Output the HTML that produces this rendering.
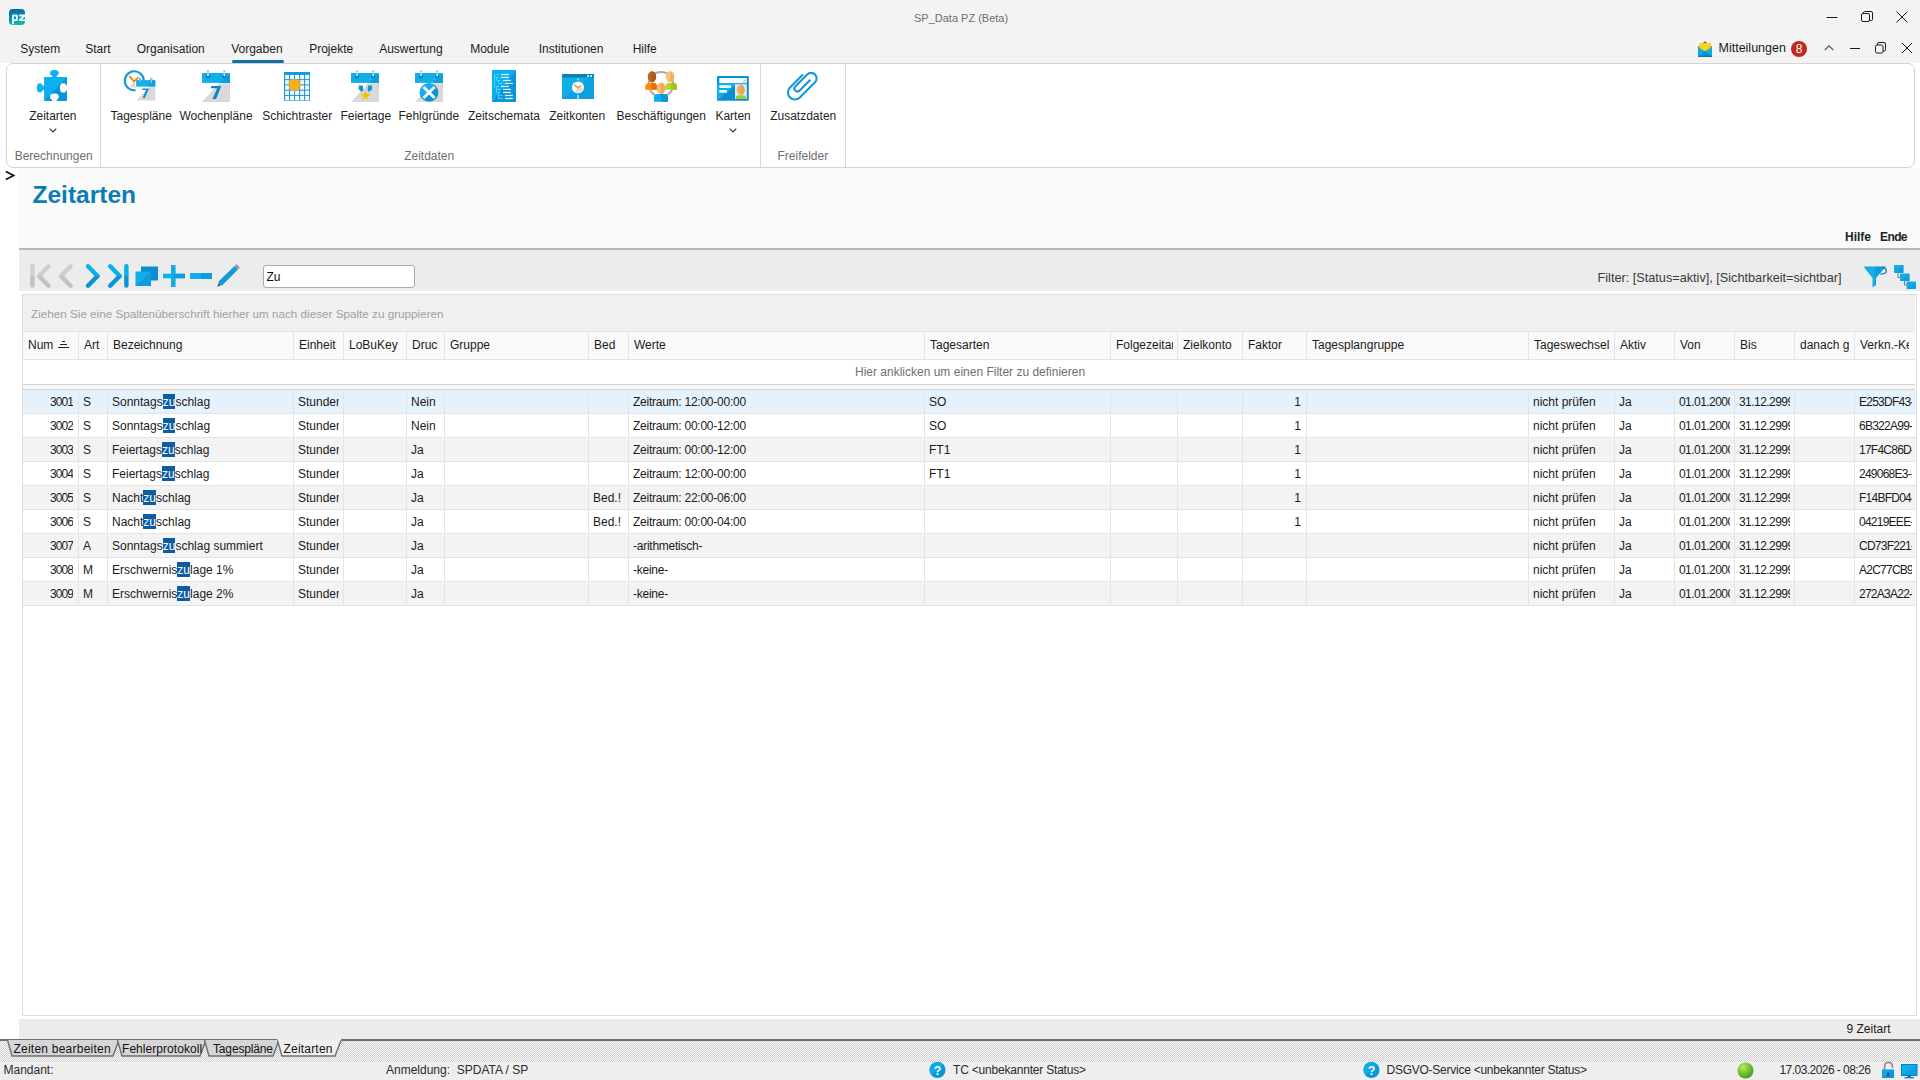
<!DOCTYPE html>
<html><head><meta charset="utf-8"><title>SP_Data PZ (Beta)</title>
<style>
html,body{margin:0;padding:0;width:1920px;height:1080px;overflow:hidden;background:#fff;font-family:"Liberation Sans",sans-serif;}
.r{position:absolute;box-sizing:content-box;}
svg.r{overflow:visible}
.t{position:absolute;white-space:nowrap;line-height:1;font-family:"Liberation Sans",sans-serif;}
.hl{background:#0b5ea6;color:#fff;padding:1px 0 0.4px 0}
.dither{background-color:#f4f4f4;background-image:repeating-linear-gradient(45deg,rgba(0,0,0,0.06) 0 1px,transparent 1px 2px),repeating-linear-gradient(-45deg,rgba(0,0,0,0.06) 0 1px,transparent 1px 2px)}
</style></head><body>
<div class="r" style="left:0px;top:0px;width:1920px;height:63px;background:#f3f3f3;"></div><div class="r" style="left:0px;top:63px;width:1920px;height:1017px;background:#ffffff;"></div><svg class="r" style="left:9px;top:9px" width="16" height="16" viewBox="0 0 16 16"><defs><linearGradient id="lg" x1="0" y1="0" x2="0.25" y2="1"><stop offset="0" stop-color="#0a5ea6"/><stop offset="0.6" stop-color="#0c8db8"/><stop offset="1" stop-color="#15b9a2"/></linearGradient></defs><rect x="0" y="0" width="16" height="16" rx="3.8" fill="url(#lg)"/><path fill-rule="evenodd" d="M3 6.6 Q3 5.6 4 5.6 H7.8 Q8.8 5.6 8.8 6.6 V11 Q8.8 12 7.8 12 H4.9 V15.2 H3 Z M4.9 7.4 V10.2 H7 V7.4 Z" fill="#e9fbff"/><path d="M10.1 5.6 H16 V7.4 L12.9 10.2 H16 V12 H10.1 V10.2 L13.2 7.4 H10.1 Z" fill="#e9fbff"/></svg><div class="t " style="left:914.0px;top:12.69px;font-size:11px;color:#6e6e6e;font-weight:400;">SP_Data PZ (Beta)</div><svg class="r" style="left:1826px;top:11px" width="12" height="12" viewBox="0 0 12 12"><line x1="0.5" y1="6.5" x2="11.5" y2="6.5" stroke="#1b1b1b" stroke-width="1"/></svg><svg class="r" style="left:1861px;top:11px" width="12" height="12" viewBox="0 0 12 12"><rect x="0.5" y="2.5" width="8" height="8" rx="1.5" fill="none" stroke="#1b1b1b"/><path d="M2.5 2.5 V1.5 a1 1 0 0 1 1 -1 H10 a1.5 1.5 0 0 1 1.5 1.5 V8.5 a1 1 0 0 1 -1 1 H8.5" fill="none" stroke="#1b1b1b"/></svg><svg class="r" style="left:1896px;top:11px" width="12" height="12" viewBox="0 0 12 12"><path d="M0.5 0.5 L11.5 11.5 M11.5 0.5 L0.5 11.5" stroke="#1b1b1b" stroke-width="1"/></svg><div class="t " style="left:20.2px;top:42.84px;font-size:12px;color:#1b1b1b;font-weight:400;">System</div><div class="t " style="left:85.2px;top:42.84px;font-size:12px;color:#1b1b1b;font-weight:400;">Start</div><div class="t " style="left:136.7px;top:42.84px;font-size:12px;color:#1b1b1b;font-weight:400;">Organisation</div><div class="t " style="left:231.2px;top:42.84px;font-size:12px;color:#1b1b1b;font-weight:400;">Vorgaben</div><div class="t " style="left:309.2px;top:42.84px;font-size:12px;color:#1b1b1b;font-weight:400;">Projekte</div><div class="t " style="left:379.2px;top:42.84px;font-size:12px;color:#1b1b1b;font-weight:400;">Auswertung</div><div class="t " style="left:470.2px;top:42.84px;font-size:12px;color:#1b1b1b;font-weight:400;">Module</div><div class="t " style="left:538.7px;top:42.84px;font-size:12px;color:#1b1b1b;font-weight:400;">Institutionen</div><div class="t " style="left:632.7px;top:42.84px;font-size:12px;color:#1b1b1b;font-weight:400;">Hilfe</div><div class="r" style="left:232px;top:60px;width:52px;height:3px;background:#0f6fa6;border-radius:2px"></div><svg class="r" style="left:1697px;top:41px" width="16" height="16" viewBox="0 0 16 16"><path d="M5.5 2.2 L8 0.2 L10.5 2.2 Z" fill="#2f6f6a"/><rect x="1" y="5.2" width="14" height="10.6" fill="#0aaeea"/><path d="M1 15.8 L8 10.2 L15 15.8 Z" fill="#0a8fd0"/><rect x="1" y="14.8" width="14" height="1" fill="#0a6fa8"/><path d="M1.3 5.3 L8 10.6 L14.7 5.3" fill="none" stroke="#3a8a7a" stroke-width="0.8"/><path d="M2.3 2 H13.7 V7 L8 10.3 L2.3 7 Z" fill="#fbd21e"/><path d="M13.7 4 V7 L10 9.2 Z" fill="#eeb40a"/></svg><div class="t " style="left:1718.5px;top:42.42px;font-size:12.5px;color:#1b1b1b;font-weight:400;">Mitteilungen</div><svg class="r" style="left:1791px;top:41px" width="16" height="16" viewBox="0 0 16 16"><circle cx="8" cy="8" r="8" fill="#c4281c"/><text x="8" y="12.3" text-anchor="middle" font-family="Liberation Sans" font-size="12" fill="#fff">8</text></svg><svg class="r" style="left:1824px;top:44px" width="10" height="8" viewBox="0 0 10 8"><path d="M0.8 6 L5 1.8 L9.2 6" fill="none" stroke="#555" stroke-width="1.1"/></svg><svg class="r" style="left:1849px;top:43px" width="12" height="10" viewBox="0 0 12 10"><line x1="1" y1="5.5" x2="11" y2="5.5" stroke="#1b1b1b" stroke-width="1"/></svg><svg class="r" style="left:1875px;top:42px" width="12" height="12" viewBox="0 0 12 12"><rect x="0.5" y="3" width="7.5" height="8" rx="1.5" fill="none" stroke="#1b1b1b"/><path d="M2.5 3 V2 a1.5 1.5 0 0 1 1.5 -1.5 H9 a1.5 1.5 0 0 1 1.5 1.5 V7.5 a1.5 1.5 0 0 1 -1.5 1.5 H8" fill="none" stroke="#1b1b1b"/></svg><svg class="r" style="left:1901px;top:42px" width="12" height="12" viewBox="0 0 12 12"><path d="M1 1 L11 11 M11 1 L1 11" stroke="#1b1b1b" stroke-width="1"/></svg><div class="r" style="left:6px;top:63px;width:1907px;height:103px;border:1px solid #d3d3d3;border-radius:7px;background:#fff"></div><div class="r" style="left:100px;top:64px;width:1px;height:103px;background:#d9d9d9;"></div><div class="r" style="left:760px;top:64px;width:1px;height:103px;background:#d9d9d9;"></div><div class="r" style="left:845px;top:64px;width:1px;height:103px;background:#d9d9d9;"></div><svg class="r" style="left:36px;top:69px" width="32" height="33" viewBox="0 0 32 33"><defs><mask id="pm"><rect width="32" height="33" fill="#fff"/><ellipse cx="27.3" cy="18.9" rx="3.4" ry="4.7" fill="#000"/><rect x="28" y="16.6" width="4" height="4.6" fill="#000"/><ellipse cx="18.4" cy="27.7" rx="4.4" ry="3.3" fill="#000"/><rect x="16.2" y="28" width="4.4" height="5" fill="#000"/></mask>
<clipPath id="pc"><path d="M8 32 L31 8 V32 Z"/></clipPath></defs>
<g mask="url(#pm)">
<rect x="8.1" y="8" width="22.8" height="23.9" fill="#0ab0ef"/>
<ellipse cx="18.4" cy="3.9" rx="4.4" ry="2.9" fill="#0ab0ef"/><rect x="16.2" y="4" width="4.4" height="4.5" fill="#0ab0ef"/>
<ellipse cx="3.8" cy="18.9" rx="2.9" ry="4.6" fill="#0ab0ef"/><rect x="3.8" y="16.7" width="4.8" height="4.4" fill="#0ab0ef"/>
<g clip-path="url(#pc)"><rect x="8.1" y="8" width="22.8" height="23.9" fill="#0a96d6"/></g></g></svg><svg class="r" style="left:202px;top:70px" width="28" height="32" viewBox="0 0 28 32"><path d="M16.9 13.2 H28 V32 H0 Z" fill="#d9d9d9"/>
<rect x="0" y="3" width="28" height="9.9" fill="#12aeea"/>
<path d="M18 12.9 L28 4 V12.9 Z" fill="#0b8fd2" opacity="0.6"/>
<path d="M6 0.3 V6.5 M22.2 0.3 V6.5" stroke="#c9eefc" stroke-width="1.3"/>
<path d="M6 0.3 V2.5 M22.2 0.3 V2.5" stroke="#9aa" stroke-width="1.3"/>
<path d="M4.4 5.6 A1.6 2 0 0 0 7.6 5.6 M20.6 5.6 A1.6 2 0 0 0 23.8 5.6" fill="none" stroke="#0b4e7e" stroke-width="1"/>
<path d="M9.1 16.1 H19.3 L14 28.9 H10.5 L15.2 18.2 H9.1 Z" fill="#0a86c8"/></svg><svg class="r" style="left:351px;top:70px" width="28" height="32" viewBox="0 0 28 32"><path d="M16.9 13.2 H28 V32 H0 Z" fill="#d9d9d9"/>
<rect x="0" y="3" width="28" height="9.9" fill="#12aeea"/>
<path d="M18 12.9 L28 4 V12.9 Z" fill="#0b8fd2" opacity="0.6"/>
<path d="M6 0.3 V6.5 M22.2 0.3 V6.5" stroke="#c9eefc" stroke-width="1.3"/>
<path d="M6 0.3 V2.5 M22.2 0.3 V2.5" stroke="#9aa" stroke-width="1.3"/>
<path d="M4.4 5.6 A1.6 2 0 0 0 7.6 5.6 M20.6 5.6 A1.6 2 0 0 0 23.8 5.6" fill="none" stroke="#0b4e7e" stroke-width="1"/>
<path d="M7.8 15.5 H12 V20.5 L11 22 L7.8 19.5 Z" fill="#0a95d6"/><path d="M16.8 15.5 H21 V19.5 L17.8 22 L16.8 20.5 Z" fill="#0a95d6"/><path d="M14.40 20.20 L15.81 23.86 L19.73 24.07 L16.68 26.54 L17.69 30.33 L14.40 28.20 L11.11 30.33 L12.12 26.54 L9.07 24.07 L12.99 23.86 Z" fill="#f7c51e"/><path d="M14.4 20.2 L16 23.9 L20 24 L14.4 27 Z" fill="#e9a90f" opacity="0.5"/></svg><svg class="r" style="left:415px;top:70px" width="28" height="32" viewBox="0 0 28 32"><path d="M16.9 13.2 H28 V32 H0 Z" fill="#d9d9d9"/>
<rect x="0" y="3" width="28" height="9.9" fill="#12aeea"/>
<path d="M18 12.9 L28 4 V12.9 Z" fill="#0b8fd2" opacity="0.6"/>
<path d="M6 0.3 V6.5 M22.2 0.3 V6.5" stroke="#c9eefc" stroke-width="1.3"/>
<path d="M6 0.3 V2.5 M22.2 0.3 V2.5" stroke="#9aa" stroke-width="1.3"/>
<path d="M4.4 5.6 A1.6 2 0 0 0 7.6 5.6 M20.6 5.6 A1.6 2 0 0 0 23.8 5.6" fill="none" stroke="#0b4e7e" stroke-width="1"/>
<circle cx="14.1" cy="22.5" r="9.3" fill="#0a95d6"/><path d="M14.1 13.2 A9.3 9.3 0 0 0 7.5 29.1 L20.7 15.9 A9.3 9.3 0 0 0 14.1 13.2 Z" fill="#12aeea"/><path d="M8.6 17 L19.6 28 M19.6 17 L8.6 28" stroke="#fff" stroke-width="2.8"/></svg><svg class="r" style="left:123px;top:70px" width="34" height="32" viewBox="0 0 34 32"><path d="M11.3 11 L6.8 17.3 L12.8 17.8 Z" fill="#d9d9d9"/>
<path d="M20.79 10.3 A9.5 9.5 0 1 0 12.62 20.2" fill="none" stroke="#1499d8" stroke-width="2.1"/>
<path d="M6.3 5.9 L11 11.6 L15.4 7.3" fill="none" stroke="#e0841c" stroke-width="1.7"/>
<path d="M26.7 16.6 H32.3 V30.5 H13.3 Z" fill="#d9d9d9"/>
<rect x="13.1" y="10.1" width="19.2" height="6.5" fill="#12aeea"/>
<path d="M24 16.6 L32.3 10.1 V16.6 Z" fill="#0b8fd2" opacity="0.45"/>
<rect x="16.4" y="8" width="1.3" height="5.3" rx="0.6" fill="#d8eef8" stroke="#1778b0" stroke-width="0.5"/>
<rect x="27.7" y="8" width="1.3" height="5.3" rx="0.6" fill="#d8eef8" stroke="#1778b0" stroke-width="0.5"/>
<path d="M19.3 18.5 H26 L21.8 28 H19.6 L23.2 20.1 H19.3 Z" fill="#0b8fd2"/></svg><svg class="r" style="left:284px;top:72px" width="26" height="29" viewBox="0 0 26 29"><rect x="0" y="0" width="26" height="28.7" fill="#1d8fce"/><rect x="0" y="0" width="26" height="2" fill="#0a9fe0"/><rect x="1.1" y="2.90" width="4.0" height="4.25" fill="#f2fbff"/><rect x="6.1" y="2.90" width="4.0" height="4.25" fill="#f2fbff"/><rect x="11.1" y="2.90" width="4.0" height="4.25" fill="#f2fbff"/><rect x="16.1" y="2.90" width="4.0" height="4.25" fill="#f2fbff"/><rect x="21.1" y="2.90" width="4.0" height="4.25" fill="#f2fbff"/><rect x="1.1" y="8.15" width="4.0" height="4.25" fill="#f2fbff"/><rect x="6.1" y="8.15" width="4.0" height="4.25" fill="#f2fbff"/><rect x="11.1" y="8.15" width="4.0" height="4.25" fill="#f2fbff"/><rect x="16.1" y="8.15" width="4.0" height="4.25" fill="#f2fbff"/><rect x="21.1" y="8.15" width="4.0" height="4.25" fill="#f2fbff"/><rect x="1.1" y="13.40" width="4.0" height="4.25" fill="#f2fbff"/><rect x="6.1" y="13.40" width="4.0" height="4.25" fill="#f2fbff"/><rect x="11.1" y="13.40" width="4.0" height="4.25" fill="#f2fbff"/><rect x="16.1" y="13.40" width="4.0" height="4.25" fill="#f2fbff"/><rect x="21.1" y="13.40" width="4.0" height="4.25" fill="#f2fbff"/><rect x="1.1" y="18.65" width="4.0" height="4.25" fill="#f2fbff"/><rect x="6.1" y="18.65" width="4.0" height="4.25" fill="#f2fbff"/><rect x="11.1" y="18.65" width="4.0" height="4.25" fill="#f2fbff"/><rect x="16.1" y="18.65" width="4.0" height="4.25" fill="#f2fbff"/><rect x="21.1" y="18.65" width="4.0" height="4.25" fill="#f2fbff"/><rect x="1.1" y="23.90" width="4.0" height="4.25" fill="#f2fbff"/><rect x="6.1" y="23.90" width="4.0" height="4.25" fill="#f2fbff"/><rect x="11.1" y="23.90" width="4.0" height="4.25" fill="#f2fbff"/><rect x="16.1" y="23.90" width="4.0" height="4.25" fill="#f2fbff"/><rect x="21.1" y="23.90" width="4.0" height="4.25" fill="#f2fbff"/><defs><radialGradient id="og" cx="0.5" cy="0.5" r="0.6"><stop offset="0.55" stop-color="#f9b418"/><stop offset="1" stop-color="#f9b418" stop-opacity="0"/></radialGradient></defs><rect x="4" y="6.5" width="13" height="12.5" rx="3" fill="url(#og)"/><rect x="6" y="8.3" width="9" height="9" rx="1" fill="#f8ac16"/></svg><svg class="r" style="left:492px;top:70px" width="24" height="32" viewBox="0 0 24 32"><rect x="0" y="0" width="24" height="32" fill="#0aafef"/><path d="M0 32 L24 0 V32 Z" fill="#0a95d6"/><path d="M2.5 5 V16.4 M2.5 4.45 H7 M2.5 7.4 H7 M4.5 7.4 V10.4 H9 M6.5 10.4 V13.4 H11 M2.5 16.4 H7 M4.5 16.4 V22.4 M4.5 19.4 H9 M4.5 22.4 H9 M6.5 22.4 V28.4 M6.5 25.4 H11 M6.5 28.4 H11" stroke="#52d4fb" stroke-width="0.9" fill="none"/><rect x="10.1" y="8.50" width="7" height="1" fill="#2a6f90" opacity="0.35"/><rect x="12.1" y="11.50" width="7" height="1" fill="#2a6f90" opacity="0.35"/><rect x="14" y="14.50" width="7" height="1" fill="#2a6f90" opacity="0.35"/><rect x="12.1" y="20.50" width="7" height="1" fill="#2a6f90" opacity="0.35"/><rect x="12.1" y="23.50" width="7" height="1" fill="#2a6f90" opacity="0.35"/><rect x="14" y="26.50" width="7" height="1" fill="#2a6f90" opacity="0.35"/><rect x="9.1" y="3.85" width="7.8" height="1.3" fill="#d2f6ff"/><rect x="9.1" y="6.80" width="7.8" height="1.3" fill="#d2f6ff"/><rect x="11.1" y="9.80" width="7.8" height="1.3" fill="#d2f6ff"/><rect x="13" y="12.80" width="7.8" height="1.3" fill="#d2f6ff"/><rect x="9.1" y="15.80" width="7.8" height="1.3" fill="#d2f6ff"/><rect x="11.1" y="18.80" width="7.8" height="1.3" fill="#d2f6ff"/><rect x="11.1" y="21.80" width="7.8" height="1.3" fill="#d2f6ff"/><rect x="13" y="24.80" width="7.8" height="1.3" fill="#d2f6ff"/><rect x="13" y="27.80" width="7.8" height="1.3" fill="#d2f6ff"/></svg><svg class="r" style="left:562px;top:74px" width="32" height="26" viewBox="0 0 32 26"><rect x="0" y="0" width="32" height="25" fill="#12aeea"/><path d="M0 25 L32 0 V25 Z" fill="#0b8fd2" opacity="0.45"/><rect x="0" y="0" width="32" height="3.5" fill="#0a7fbf"/><rect x="25" y="1" width="2" height="2" fill="#aef0ff"/><rect x="28" y="1" width="2" height="2" fill="#aef0ff"/><rect x="15.2" y="4.3" width="1.7" height="1.8" fill="#8fe6ff"/><rect x="15.2" y="21" width="1.7" height="4" fill="#8fe6ff"/><circle cx="16" cy="13.5" r="6" fill="#fff"/><path d="M16 13.5 L12.6 18 A6 6 0 0 0 22 13.5 Z" fill="#dedede"/><path d="M12.3 10.8 L16 14 L19.2 11.4" fill="none" stroke="#e8851c" stroke-width="1.3"/></svg><svg class="r" style="left:640px;top:66px" width="44" height="40" viewBox="0 0 44 40"><circle cx="21" cy="18.3" r="12.3" fill="none" stroke="#ababab" stroke-width="2"/>
<ellipse cx="11.9" cy="10.8" rx="4.2" ry="5.6" fill="#bb6a22"/><path d="M11.9 5.2 a4.2 5.6 0 0 1 0 11.2 Z" fill="#a85d1c"/>
<ellipse cx="30" cy="10.8" rx="4.2" ry="5.6" fill="#f6c577"/><path d="M30 5.2 a4.2 5.6 0 0 1 0 11.2 Z" fill="#eeb35e"/>
<path d="M5.2 23.7 V21 Q5.2 16.9 9.5 16.9 H13.5 Q17 16.9 17 21 V23.7 Z" fill="#ff8c00"/><path d="M11.5 16.9 H13.5 Q17 16.9 17 21 V23.7 H11.5 Z" fill="#e86e00"/>
<path d="M25.2 23.7 V21 Q25.2 16.9 29.5 16.9 H33.5 Q37 16.9 37 21 V23.7 Z" fill="#b8d62a"/><path d="M31 16.9 H33.5 Q37 16.9 37 21 V23.7 H31 Z" fill="#a6c123"/>
<path d="M13.9 35.7 V32 Q13.9 28.1 18 28.1 H24 Q28 28.1 28 32 V35.7 Z" fill="#0aafef"/><path d="M21 28.1 H24 Q28 28.1 28 32 V35.7 H21 Z" fill="#0a95d6"/>
<ellipse cx="20.9" cy="22.3" rx="4.3" ry="5.7" fill="#f8b877"/><path d="M20.9 16.6 a4.3 5.7 0 0 1 0 11.4 Z" fill="#eea662"/></svg><svg class="r" style="left:717px;top:76px" width="32" height="25" viewBox="0 0 32 25"><rect x="0" y="0" width="31.8" height="24.8" rx="0.6" fill="#0a90d2"/><path d="M0 24.8 L0 8 L14.5 8 L20 8 L0 24.8 Z" fill="#12adeb"/>
<rect x="2.3" y="2" width="27.5" height="5.2" fill="#f4fcff"/><path d="M24.5 6.5 L28.8 2.8 V6.5 Z" fill="#d0d0d0"/>
<rect x="2.3" y="9.2" width="11.7" height="2.8" fill="#e8fbff"/><rect x="2.3" y="14" width="7.6" height="2.7" fill="#e8fbff"/>
<rect x="18" y="8.2" width="11.8" height="14.8" fill="#d8f0fb"/>
<path d="M19 23 V21.5 Q19 19.3 22 19.3 H26 Q29 19.3 29 21.5 V23 Z" fill="#a6cb2f"/>
<ellipse cx="23.7" cy="14" rx="4" ry="5" fill="#f5ad62"/><path d="M23.7 9 A4 5 0 0 1 23.7 19 Z" fill="#eea052"/></svg><svg class="r" style="left:780px;top:66px" width="44" height="40" viewBox="0 0 44 40"><path d="M23 8.5 L10 21.5 A7 7 0 0 0 19.9 31.4 L35 16.3 A5.5 5.5 0 0 0 27.2 8.5 L15 20.7 A3 3 0 0 0 19.2 24.9 L30.4 13.7" fill="none" stroke="#1596d6" stroke-width="2.1" stroke-linecap="butt"/></svg><div class="t " style="left:29.2px;top:109.84px;font-size:12px;color:#1f1f1f;font-weight:400;">Zeitarten</div><div class="t " style="left:110.5px;top:109.84px;font-size:12px;color:#1f1f1f;font-weight:400;">Tagespläne</div><div class="t " style="left:179.4px;top:109.84px;font-size:12px;color:#1f1f1f;font-weight:400;">Wochenpläne</div><div class="t " style="left:262.2px;top:109.84px;font-size:12px;color:#1f1f1f;font-weight:400;">Schichtraster</div><div class="t " style="left:340.4px;top:109.84px;font-size:12px;color:#1f1f1f;font-weight:400;">Feiertage</div><div class="t " style="left:398.4px;top:109.84px;font-size:12px;color:#1f1f1f;font-weight:400;">Fehlgründe</div><div class="t " style="left:467.9px;top:109.84px;font-size:12px;color:#1f1f1f;font-weight:400;">Zeitschemata</div><div class="t " style="left:549.2px;top:109.84px;font-size:12px;color:#1f1f1f;font-weight:400;">Zeitkonten</div><div class="t " style="left:616.5px;top:109.84px;font-size:12px;color:#1f1f1f;font-weight:400;">Beschäftigungen</div><div class="t " style="left:715.4px;top:109.84px;font-size:12px;color:#1f1f1f;font-weight:400;">Karten</div><div class="t " style="left:770.2px;top:109.84px;font-size:12px;color:#1f1f1f;font-weight:400;">Zusatzdaten</div><svg class="r" style="left:49px;top:128px" width="8" height="5" viewBox="0 0 8 5"><path d="M0.7 0.7 L4 4 L7.3 0.7" fill="none" stroke="#333" stroke-width="1.1"/></svg><svg class="r" style="left:729px;top:128px" width="8" height="5" viewBox="0 0 8 5"><path d="M0.7 0.7 L4 4 L7.3 0.7" fill="none" stroke="#333" stroke-width="1.1"/></svg><div class="t " style="left:14.7px;top:149.84px;font-size:12px;color:#6f6f6f;font-weight:400;">Berechnungen</div><div class="t " style="left:404.2px;top:149.84px;font-size:12px;color:#6f6f6f;font-weight:400;">Zeitdaten</div><div class="t " style="left:777.5px;top:149.84px;font-size:12px;color:#6f6f6f;font-weight:400;">Freifelder</div><div class="r" style="left:19px;top:168px;width:1901px;height:80px;background:#fafafa;"></div><svg class="r" style="left:4px;top:170px" width="11" height="11" viewBox="0 0 11 11"><path d="M1.8 1.6 L9.6 5.5 L1.8 9.4" fill="none" stroke="#111" stroke-width="1.7"/></svg><div class="t " style="left:32.5px;top:183.26px;font-size:24.5px;color:#0c7db3;font-weight:700;">Zeitarten</div><div class="t " style="left:1845.0px;top:230.84px;font-size:12px;color:#222;font-weight:700;">Hilfe</div><div class="t " style="left:1880.0px;top:230.84px;font-size:12px;color:#222;font-weight:700;letter-spacing:-0.6px">Ende</div><div class="r" style="left:19px;top:248px;width:1901px;height:2px;background:#b8b8b8;"></div><div class="r" style="left:19px;top:250px;width:1901px;height:41px;background:#ececec;"></div><svg class="r" style="left:25px;top:258px" width="110" height="34" viewBox="0 0 110 34"><defs><clipPath id="nt"><rect x="0" y="0" width="110" height="18"/></clipPath><clipPath id="nb"><rect x="0" y="18" width="110" height="16"/></clipPath></defs>
<g fill="none" stroke-width="4.4" stroke-linecap="round" stroke-linejoin="round">
<g clip-path="url(#nt)" stroke="#cfcfcf"><path d="M7.4 8.3 V27.6 M23.6 8.3 L14 18 L23.6 27.7 M45.6 8.3 L36 18 L45.6 27.7"/></g>
<g clip-path="url(#nb)" stroke="#c2c2c2"><path d="M7.4 8.3 V27.6 M23.6 8.3 L14 18 L23.6 27.7 M45.6 8.3 L36 18 L45.6 27.7"/></g>
<g clip-path="url(#nt)" stroke="#0aafef"><path d="M63 8.3 L72.6 18 L63 27.7 M85.2 8.3 L94.8 18 L85.2 27.7 M101.4 8.3 V27.6"/></g>
<g clip-path="url(#nb)" stroke="#0a94d4"><path d="M63 8.3 L72.6 18 L63 27.7 M85.2 8.3 L94.8 18 L85.2 27.7 M101.4 8.3 V27.6"/></g>
</g></svg><svg class="r" style="left:135px;top:266px" width="24" height="21" viewBox="0 0 24 21"><rect x="6" y="0.5" width="17" height="14" fill="#0b8fd2"/><rect x="0.5" y="5.5" width="15.5" height="14.5" fill="#12aeea"/><path d="M0.5 20 L16 5.5 V20 Z" fill="#0b8fd2" opacity="0.6"/></svg><svg class="r" style="left:162px;top:264px" width="24" height="24" viewBox="0 0 24 24"><rect x="9" y="1" width="4.6" height="22" fill="#12aeea"/><rect x="1" y="9.7" width="22" height="4.6" fill="#12aeea"/><rect x="11.3" y="9.7" width="11.7" height="4.6" fill="#0b8fd2" opacity="0.6"/></svg><svg class="r" style="left:189px;top:272px" width="24" height="8" viewBox="0 0 24 8"><rect x="1" y="1" width="22" height="6" fill="#12aeea"/><rect x="12" y="1" width="11" height="6" fill="#0b8fd2" opacity="0.6"/></svg><svg class="r" style="left:215px;top:263px" width="26" height="26" viewBox="0 0 26 26"><path d="M2.5 23.5 L4 18 L19.5 3 L23 6.5 L7.5 22 Z" fill="#1499d8"/><path d="M19.5 3 L21.5 1 L25 4.5 L23 6.5 Z" fill="#9c9c9c"/><path d="M2.5 23.5 L3.2 20.8 L5.2 22.8 Z" fill="#555"/></svg><div class="r" style="left:263px;top:265px;width:150px;height:21px;border:1px solid #aaa;border-radius:3px;background:#fff"></div><div class="t " style="left:266.5px;top:270.84px;font-size:12px;color:#111;font-weight:400;">Zu</div><div class="t " style="left:1597.5px;top:272.25px;font-size:12.7px;color:#3a3a3a;font-weight:400;">Filter: [Status=aktiv], [Sichtbarkeit=sichtbar]</div><svg class="r" style="left:1863px;top:265px" width="25" height="24" viewBox="0 0 25 24"><path d="M1 1.5 H23 L21.5 3 L13 13 V20 L9.5 22.5 V13 L1.5 3 Z" fill="#12aeea"/><path d="M12 1.5 H23 L21.5 3 L13 13 V20 L12 21 Z" fill="#0b8fd2" opacity="0.5"/><path d="M19.5 3.2 Q23.5 2.5 23.3 6 Q23 9.2 17.3 9.2" fill="none" stroke="#1a6f9f" stroke-width="1.3"/></svg><svg class="r" style="left:1893px;top:264px" width="24" height="26" viewBox="0 0 24 26"><path d="M5 9 V13.5 H8 M11.5 17 V21 H14" fill="none" stroke="#777" stroke-width="1"/><rect x="1" y="1" width="9.5" height="8" rx="1" fill="#12aeea"/><rect x="7" y="9.5" width="9.5" height="7.5" rx="1" fill="#12aeea"/><rect x="13.5" y="17.5" width="9.5" height="7.5" rx="1" fill="#12aeea"/><path d="M1 9 L10.5 1 V9 Z M7 17 L16.5 9.5 V17 Z M13.5 25 L23 17.5 V25 Z" fill="#0b8fd2" opacity="0.5"/></svg><div class="r" style="left:22px;top:294px;width:1893px;height:720px;border:1px solid #dcdcdc;background:#fff"></div><div class="r" style="left:23px;top:295px;width:1892px;height:36px;background:#f0f0f0;"></div><div class="t " style="left:31.0px;top:308.10px;font-size:11.7px;color:#a0a0a0;font-weight:400;">Ziehen Sie eine Spaltenüberschrift hierher um nach dieser Spalte zu gruppieren</div><div class="r" style="left:23px;top:331px;width:1892px;height:28px;background:#f9f9f9;"></div><div class="r" style="left:23px;top:331px;width:1892px;height:1px;background:#e4e4e4;"></div><div class="r" style="left:23px;top:359px;width:1892px;height:1px;background:#e4e4e4;"></div><div class="t" style="left:28px;top:338.84px;width:47.0px;height:15px;overflow:hidden;font-size:12px;color:#1b1b1b">Num</div><div class="r" style="left:78px;top:332px;width:1px;height:27px;background:#e4e4e4;"></div><div class="t" style="left:84px;top:338.84px;width:20.0px;height:15px;overflow:hidden;font-size:12px;color:#1b1b1b">Art</div><div class="r" style="left:107px;top:332px;width:1px;height:27px;background:#e4e4e4;"></div><div class="t" style="left:113px;top:338.84px;width:177.0px;height:15px;overflow:hidden;font-size:12px;color:#1b1b1b">Bezeichnung</div><div class="r" style="left:293px;top:332px;width:1px;height:27px;background:#e4e4e4;"></div><div class="t" style="left:299px;top:338.84px;width:41.0px;height:15px;overflow:hidden;font-size:12px;color:#1b1b1b">Einheit</div><div class="r" style="left:343px;top:332px;width:1px;height:27px;background:#e4e4e4;"></div><div class="t" style="left:349px;top:338.84px;width:54.0px;height:15px;overflow:hidden;font-size:12px;color:#1b1b1b">LoBuKey</div><div class="r" style="left:406px;top:332px;width:1px;height:27px;background:#e4e4e4;"></div><div class="t" style="left:412px;top:338.84px;width:25.5px;height:15px;overflow:hidden;font-size:12px;color:#1b1b1b">Druck</div><div class="r" style="left:444px;top:332px;width:1px;height:27px;background:#e4e4e4;"></div><div class="t" style="left:450px;top:338.84px;width:135.0px;height:15px;overflow:hidden;font-size:12px;color:#1b1b1b">Gruppe</div><div class="r" style="left:588px;top:332px;width:1px;height:27px;background:#e4e4e4;"></div><div class="t" style="left:594px;top:338.84px;width:31.0px;height:15px;overflow:hidden;font-size:12px;color:#1b1b1b">Bed</div><div class="r" style="left:628px;top:332px;width:1px;height:27px;background:#e4e4e4;"></div><div class="t" style="left:634px;top:338.84px;width:287.0px;height:15px;overflow:hidden;font-size:12px;color:#1b1b1b">Werte</div><div class="r" style="left:924px;top:332px;width:1px;height:27px;background:#e4e4e4;"></div><div class="t" style="left:930px;top:338.84px;width:177.0px;height:15px;overflow:hidden;font-size:12px;color:#1b1b1b">Tagesarten</div><div class="r" style="left:1110px;top:332px;width:1px;height:27px;background:#e4e4e4;"></div><div class="t" style="left:1116px;top:338.84px;width:57.0px;height:15px;overflow:hidden;font-size:12px;color:#1b1b1b">Folgezeitart</div><div class="r" style="left:1177px;top:332px;width:1px;height:27px;background:#e4e4e4;"></div><div class="t" style="left:1183px;top:338.84px;width:56.0px;height:15px;overflow:hidden;font-size:12px;color:#1b1b1b">Zielkonto</div><div class="r" style="left:1242px;top:332px;width:1px;height:27px;background:#e4e4e4;"></div><div class="t" style="left:1248px;top:338.84px;width:55.0px;height:15px;overflow:hidden;font-size:12px;color:#1b1b1b">Faktor</div><div class="r" style="left:1306px;top:332px;width:1px;height:27px;background:#e4e4e4;"></div><div class="t" style="left:1312px;top:338.84px;width:213.0px;height:15px;overflow:hidden;font-size:12px;color:#1b1b1b">Tagesplangruppe</div><div class="r" style="left:1528px;top:332px;width:1px;height:27px;background:#e4e4e4;"></div><div class="t" style="left:1534px;top:338.84px;width:77.0px;height:15px;overflow:hidden;font-size:12px;color:#1b1b1b">Tageswechsel</div><div class="r" style="left:1614px;top:332px;width:1px;height:27px;background:#e4e4e4;"></div><div class="t" style="left:1620px;top:338.84px;width:51.0px;height:15px;overflow:hidden;font-size:12px;color:#1b1b1b">Aktiv</div><div class="r" style="left:1674px;top:332px;width:1px;height:27px;background:#e4e4e4;"></div><div class="t" style="left:1680px;top:338.84px;width:51.0px;height:15px;overflow:hidden;font-size:12px;color:#1b1b1b">Von</div><div class="r" style="left:1734px;top:332px;width:1px;height:27px;background:#e4e4e4;"></div><div class="t" style="left:1740px;top:338.84px;width:51.0px;height:15px;overflow:hidden;font-size:12px;color:#1b1b1b">Bis</div><div class="r" style="left:1794px;top:332px;width:1px;height:27px;background:#e4e4e4;"></div><div class="t" style="left:1800px;top:338.84px;width:49.0px;height:15px;overflow:hidden;font-size:12px;color:#1b1b1b">danach gültig</div><div class="r" style="left:1854px;top:332px;width:1px;height:27px;background:#e4e4e4;"></div><div class="t" style="left:1860px;top:338.84px;width:49.0px;height:15px;overflow:hidden;font-size:12px;color:#1b1b1b">Verkn.-Kennung</div><svg class="r" style="left:57px;top:340px" width="13" height="9" viewBox="0 0 13 9"><path d="M5 1.5 H8 M3 4.5 H10 M1 7.5 H12" stroke="#222" stroke-width="1"/></svg><div class="t " style="left:855.0px;top:365.84px;font-size:12px;color:#707070;font-weight:400;">Hier anklicken um einen Filter zu definieren</div><div class="r" style="left:23px;top:384px;width:1892px;height:1px;background:#d4d4d4;"></div><div class="r" style="left:23px;top:385px;width:1892px;height:4px;background:#f7f7f7;"></div><div class="r" style="left:23px;top:389px;width:1892px;height:1px;background:#d4d4d4;"></div><div class="r" style="left:23px;top:390px;width:1893px;height:23px;background:#e5f1fb;"></div><div class="r" style="left:23px;top:413px;width:1893px;height:1px;background:#e4e4e4;"></div><div class="r" style="left:78px;top:390px;width:1px;height:23px;background:#e4e4e4;"></div><div class="r" style="left:107px;top:390px;width:1px;height:23px;background:#e4e4e4;"></div><div class="r" style="left:293px;top:390px;width:1px;height:23px;background:#e4e4e4;"></div><div class="r" style="left:343px;top:390px;width:1px;height:23px;background:#e4e4e4;"></div><div class="r" style="left:406px;top:390px;width:1px;height:23px;background:#e4e4e4;"></div><div class="r" style="left:444px;top:390px;width:1px;height:23px;background:#e4e4e4;"></div><div class="r" style="left:588px;top:390px;width:1px;height:23px;background:#e4e4e4;"></div><div class="r" style="left:628px;top:390px;width:1px;height:23px;background:#e4e4e4;"></div><div class="r" style="left:924px;top:390px;width:1px;height:23px;background:#e4e4e4;"></div><div class="r" style="left:1110px;top:390px;width:1px;height:23px;background:#e4e4e4;"></div><div class="r" style="left:1177px;top:390px;width:1px;height:23px;background:#e4e4e4;"></div><div class="r" style="left:1242px;top:390px;width:1px;height:23px;background:#e4e4e4;"></div><div class="r" style="left:1306px;top:390px;width:1px;height:23px;background:#e4e4e4;"></div><div class="r" style="left:1528px;top:390px;width:1px;height:23px;background:#e4e4e4;"></div><div class="r" style="left:1614px;top:390px;width:1px;height:23px;background:#e4e4e4;"></div><div class="r" style="left:1674px;top:390px;width:1px;height:23px;background:#e4e4e4;"></div><div class="r" style="left:1734px;top:390px;width:1px;height:23px;background:#e4e4e4;"></div><div class="r" style="left:1794px;top:390px;width:1px;height:23px;background:#e4e4e4;"></div><div class="r" style="left:1854px;top:390px;width:1px;height:23px;background:#e4e4e4;"></div><div class="t" style="left:22px;top:395.84px;width:51px;height:15px;text-align:right;overflow:hidden;font-size:12px;color:#1b1b1b;letter-spacing:-0.9px;">3001</div><div class="t" style="left:83px;top:395.84px;width:20px;height:15px;overflow:hidden;font-size:12px;color:#1b1b1b;">S</div><div class="t" style="left:112px;top:395.84px;font-size:12px;color:#1b1b1b">Sonntags<span class="hl">zu</span>schlag</div><div class="t" style="left:298px;top:395.84px;width:41px;height:15px;overflow:hidden;font-size:12px;color:#1b1b1b;">Stunden</div><div class="t" style="left:411px;top:395.84px;width:29px;height:15px;overflow:hidden;font-size:12px;color:#1b1b1b;">Nein</div><div class="t" style="left:593px;top:395.84px;width:31px;height:15px;overflow:hidden;font-size:12px;color:#1b1b1b;"></div><div class="t" style="left:633px;top:395.84px;width:287px;height:15px;overflow:hidden;font-size:12px;color:#1b1b1b;letter-spacing:-0.25px;">Zeitraum: 12:00-00:00</div><div class="t" style="left:929px;top:395.84px;width:177px;height:15px;overflow:hidden;font-size:12px;color:#1b1b1b;">SO</div><div class="t" style="left:1242px;top:395.84px;width:59px;height:15px;text-align:right;overflow:hidden;font-size:12px;color:#1b1b1b;">1</div><div class="t" style="left:1533px;top:395.84px;width:77px;height:15px;overflow:hidden;font-size:12px;color:#1b1b1b;">nicht prüfen</div><div class="t" style="left:1619px;top:395.84px;width:51px;height:15px;overflow:hidden;font-size:12px;color:#1b1b1b;">Ja</div><div class="t" style="left:1679px;top:395.84px;width:51px;height:15px;overflow:hidden;font-size:12px;color:#1b1b1b;letter-spacing:-0.55px;">01.01.2000</div><div class="t" style="left:1739px;top:395.84px;width:51px;height:15px;overflow:hidden;font-size:12px;color:#1b1b1b;letter-spacing:-0.55px;">31.12.2999</div><div class="t" style="left:1859px;top:395.84px;width:53px;height:15px;overflow:hidden;font-size:12px;color:#1b1b1b;letter-spacing:-0.75px;">E253DF43-A</div><div class="r" style="left:23px;top:414px;width:1893px;height:23px;background:#ffffff;"></div><div class="r" style="left:23px;top:437px;width:1893px;height:1px;background:#e4e4e4;"></div><div class="r" style="left:78px;top:414px;width:1px;height:23px;background:#e4e4e4;"></div><div class="r" style="left:107px;top:414px;width:1px;height:23px;background:#e4e4e4;"></div><div class="r" style="left:293px;top:414px;width:1px;height:23px;background:#e4e4e4;"></div><div class="r" style="left:343px;top:414px;width:1px;height:23px;background:#e4e4e4;"></div><div class="r" style="left:406px;top:414px;width:1px;height:23px;background:#e4e4e4;"></div><div class="r" style="left:444px;top:414px;width:1px;height:23px;background:#e4e4e4;"></div><div class="r" style="left:588px;top:414px;width:1px;height:23px;background:#e4e4e4;"></div><div class="r" style="left:628px;top:414px;width:1px;height:23px;background:#e4e4e4;"></div><div class="r" style="left:924px;top:414px;width:1px;height:23px;background:#e4e4e4;"></div><div class="r" style="left:1110px;top:414px;width:1px;height:23px;background:#e4e4e4;"></div><div class="r" style="left:1177px;top:414px;width:1px;height:23px;background:#e4e4e4;"></div><div class="r" style="left:1242px;top:414px;width:1px;height:23px;background:#e4e4e4;"></div><div class="r" style="left:1306px;top:414px;width:1px;height:23px;background:#e4e4e4;"></div><div class="r" style="left:1528px;top:414px;width:1px;height:23px;background:#e4e4e4;"></div><div class="r" style="left:1614px;top:414px;width:1px;height:23px;background:#e4e4e4;"></div><div class="r" style="left:1674px;top:414px;width:1px;height:23px;background:#e4e4e4;"></div><div class="r" style="left:1734px;top:414px;width:1px;height:23px;background:#e4e4e4;"></div><div class="r" style="left:1794px;top:414px;width:1px;height:23px;background:#e4e4e4;"></div><div class="r" style="left:1854px;top:414px;width:1px;height:23px;background:#e4e4e4;"></div><div class="t" style="left:22px;top:419.84px;width:51px;height:15px;text-align:right;overflow:hidden;font-size:12px;color:#1b1b1b;letter-spacing:-0.9px;">3002</div><div class="t" style="left:83px;top:419.84px;width:20px;height:15px;overflow:hidden;font-size:12px;color:#1b1b1b;">S</div><div class="t" style="left:112px;top:419.84px;font-size:12px;color:#1b1b1b">Sonntags<span class="hl">zu</span>schlag</div><div class="t" style="left:298px;top:419.84px;width:41px;height:15px;overflow:hidden;font-size:12px;color:#1b1b1b;">Stunden</div><div class="t" style="left:411px;top:419.84px;width:29px;height:15px;overflow:hidden;font-size:12px;color:#1b1b1b;">Nein</div><div class="t" style="left:593px;top:419.84px;width:31px;height:15px;overflow:hidden;font-size:12px;color:#1b1b1b;"></div><div class="t" style="left:633px;top:419.84px;width:287px;height:15px;overflow:hidden;font-size:12px;color:#1b1b1b;letter-spacing:-0.25px;">Zeitraum: 00:00-12:00</div><div class="t" style="left:929px;top:419.84px;width:177px;height:15px;overflow:hidden;font-size:12px;color:#1b1b1b;">SO</div><div class="t" style="left:1242px;top:419.84px;width:59px;height:15px;text-align:right;overflow:hidden;font-size:12px;color:#1b1b1b;">1</div><div class="t" style="left:1533px;top:419.84px;width:77px;height:15px;overflow:hidden;font-size:12px;color:#1b1b1b;">nicht prüfen</div><div class="t" style="left:1619px;top:419.84px;width:51px;height:15px;overflow:hidden;font-size:12px;color:#1b1b1b;">Ja</div><div class="t" style="left:1679px;top:419.84px;width:51px;height:15px;overflow:hidden;font-size:12px;color:#1b1b1b;letter-spacing:-0.55px;">01.01.2000</div><div class="t" style="left:1739px;top:419.84px;width:51px;height:15px;overflow:hidden;font-size:12px;color:#1b1b1b;letter-spacing:-0.55px;">31.12.2999</div><div class="t" style="left:1859px;top:419.84px;width:53px;height:15px;overflow:hidden;font-size:12px;color:#1b1b1b;letter-spacing:-0.75px;">6B322A99-4</div><div class="r" style="left:23px;top:438px;width:1893px;height:23px;background:#f3f3f3;"></div><div class="r" style="left:23px;top:461px;width:1893px;height:1px;background:#e4e4e4;"></div><div class="r" style="left:78px;top:438px;width:1px;height:23px;background:#e4e4e4;"></div><div class="r" style="left:107px;top:438px;width:1px;height:23px;background:#e4e4e4;"></div><div class="r" style="left:293px;top:438px;width:1px;height:23px;background:#e4e4e4;"></div><div class="r" style="left:343px;top:438px;width:1px;height:23px;background:#e4e4e4;"></div><div class="r" style="left:406px;top:438px;width:1px;height:23px;background:#e4e4e4;"></div><div class="r" style="left:444px;top:438px;width:1px;height:23px;background:#e4e4e4;"></div><div class="r" style="left:588px;top:438px;width:1px;height:23px;background:#e4e4e4;"></div><div class="r" style="left:628px;top:438px;width:1px;height:23px;background:#e4e4e4;"></div><div class="r" style="left:924px;top:438px;width:1px;height:23px;background:#e4e4e4;"></div><div class="r" style="left:1110px;top:438px;width:1px;height:23px;background:#e4e4e4;"></div><div class="r" style="left:1177px;top:438px;width:1px;height:23px;background:#e4e4e4;"></div><div class="r" style="left:1242px;top:438px;width:1px;height:23px;background:#e4e4e4;"></div><div class="r" style="left:1306px;top:438px;width:1px;height:23px;background:#e4e4e4;"></div><div class="r" style="left:1528px;top:438px;width:1px;height:23px;background:#e4e4e4;"></div><div class="r" style="left:1614px;top:438px;width:1px;height:23px;background:#e4e4e4;"></div><div class="r" style="left:1674px;top:438px;width:1px;height:23px;background:#e4e4e4;"></div><div class="r" style="left:1734px;top:438px;width:1px;height:23px;background:#e4e4e4;"></div><div class="r" style="left:1794px;top:438px;width:1px;height:23px;background:#e4e4e4;"></div><div class="r" style="left:1854px;top:438px;width:1px;height:23px;background:#e4e4e4;"></div><div class="t" style="left:22px;top:443.84px;width:51px;height:15px;text-align:right;overflow:hidden;font-size:12px;color:#1b1b1b;letter-spacing:-0.9px;">3003</div><div class="t" style="left:83px;top:443.84px;width:20px;height:15px;overflow:hidden;font-size:12px;color:#1b1b1b;">S</div><div class="t" style="left:112px;top:443.84px;font-size:12px;color:#1b1b1b">Feiertags<span class="hl">zu</span>schlag</div><div class="t" style="left:298px;top:443.84px;width:41px;height:15px;overflow:hidden;font-size:12px;color:#1b1b1b;">Stunden</div><div class="t" style="left:411px;top:443.84px;width:29px;height:15px;overflow:hidden;font-size:12px;color:#1b1b1b;">Ja</div><div class="t" style="left:593px;top:443.84px;width:31px;height:15px;overflow:hidden;font-size:12px;color:#1b1b1b;"></div><div class="t" style="left:633px;top:443.84px;width:287px;height:15px;overflow:hidden;font-size:12px;color:#1b1b1b;letter-spacing:-0.25px;">Zeitraum: 00:00-12:00</div><div class="t" style="left:929px;top:443.84px;width:177px;height:15px;overflow:hidden;font-size:12px;color:#1b1b1b;">FT1</div><div class="t" style="left:1242px;top:443.84px;width:59px;height:15px;text-align:right;overflow:hidden;font-size:12px;color:#1b1b1b;">1</div><div class="t" style="left:1533px;top:443.84px;width:77px;height:15px;overflow:hidden;font-size:12px;color:#1b1b1b;">nicht prüfen</div><div class="t" style="left:1619px;top:443.84px;width:51px;height:15px;overflow:hidden;font-size:12px;color:#1b1b1b;">Ja</div><div class="t" style="left:1679px;top:443.84px;width:51px;height:15px;overflow:hidden;font-size:12px;color:#1b1b1b;letter-spacing:-0.55px;">01.01.2000</div><div class="t" style="left:1739px;top:443.84px;width:51px;height:15px;overflow:hidden;font-size:12px;color:#1b1b1b;letter-spacing:-0.55px;">31.12.2999</div><div class="t" style="left:1859px;top:443.84px;width:53px;height:15px;overflow:hidden;font-size:12px;color:#1b1b1b;letter-spacing:-0.75px;">17F4C86D-</div><div class="r" style="left:23px;top:462px;width:1893px;height:23px;background:#ffffff;"></div><div class="r" style="left:23px;top:485px;width:1893px;height:1px;background:#e4e4e4;"></div><div class="r" style="left:78px;top:462px;width:1px;height:23px;background:#e4e4e4;"></div><div class="r" style="left:107px;top:462px;width:1px;height:23px;background:#e4e4e4;"></div><div class="r" style="left:293px;top:462px;width:1px;height:23px;background:#e4e4e4;"></div><div class="r" style="left:343px;top:462px;width:1px;height:23px;background:#e4e4e4;"></div><div class="r" style="left:406px;top:462px;width:1px;height:23px;background:#e4e4e4;"></div><div class="r" style="left:444px;top:462px;width:1px;height:23px;background:#e4e4e4;"></div><div class="r" style="left:588px;top:462px;width:1px;height:23px;background:#e4e4e4;"></div><div class="r" style="left:628px;top:462px;width:1px;height:23px;background:#e4e4e4;"></div><div class="r" style="left:924px;top:462px;width:1px;height:23px;background:#e4e4e4;"></div><div class="r" style="left:1110px;top:462px;width:1px;height:23px;background:#e4e4e4;"></div><div class="r" style="left:1177px;top:462px;width:1px;height:23px;background:#e4e4e4;"></div><div class="r" style="left:1242px;top:462px;width:1px;height:23px;background:#e4e4e4;"></div><div class="r" style="left:1306px;top:462px;width:1px;height:23px;background:#e4e4e4;"></div><div class="r" style="left:1528px;top:462px;width:1px;height:23px;background:#e4e4e4;"></div><div class="r" style="left:1614px;top:462px;width:1px;height:23px;background:#e4e4e4;"></div><div class="r" style="left:1674px;top:462px;width:1px;height:23px;background:#e4e4e4;"></div><div class="r" style="left:1734px;top:462px;width:1px;height:23px;background:#e4e4e4;"></div><div class="r" style="left:1794px;top:462px;width:1px;height:23px;background:#e4e4e4;"></div><div class="r" style="left:1854px;top:462px;width:1px;height:23px;background:#e4e4e4;"></div><div class="t" style="left:22px;top:467.84px;width:51px;height:15px;text-align:right;overflow:hidden;font-size:12px;color:#1b1b1b;letter-spacing:-0.9px;">3004</div><div class="t" style="left:83px;top:467.84px;width:20px;height:15px;overflow:hidden;font-size:12px;color:#1b1b1b;">S</div><div class="t" style="left:112px;top:467.84px;font-size:12px;color:#1b1b1b">Feiertags<span class="hl">zu</span>schlag</div><div class="t" style="left:298px;top:467.84px;width:41px;height:15px;overflow:hidden;font-size:12px;color:#1b1b1b;">Stunden</div><div class="t" style="left:411px;top:467.84px;width:29px;height:15px;overflow:hidden;font-size:12px;color:#1b1b1b;">Ja</div><div class="t" style="left:593px;top:467.84px;width:31px;height:15px;overflow:hidden;font-size:12px;color:#1b1b1b;"></div><div class="t" style="left:633px;top:467.84px;width:287px;height:15px;overflow:hidden;font-size:12px;color:#1b1b1b;letter-spacing:-0.25px;">Zeitraum: 12:00-00:00</div><div class="t" style="left:929px;top:467.84px;width:177px;height:15px;overflow:hidden;font-size:12px;color:#1b1b1b;">FT1</div><div class="t" style="left:1242px;top:467.84px;width:59px;height:15px;text-align:right;overflow:hidden;font-size:12px;color:#1b1b1b;">1</div><div class="t" style="left:1533px;top:467.84px;width:77px;height:15px;overflow:hidden;font-size:12px;color:#1b1b1b;">nicht prüfen</div><div class="t" style="left:1619px;top:467.84px;width:51px;height:15px;overflow:hidden;font-size:12px;color:#1b1b1b;">Ja</div><div class="t" style="left:1679px;top:467.84px;width:51px;height:15px;overflow:hidden;font-size:12px;color:#1b1b1b;letter-spacing:-0.55px;">01.01.2000</div><div class="t" style="left:1739px;top:467.84px;width:51px;height:15px;overflow:hidden;font-size:12px;color:#1b1b1b;letter-spacing:-0.55px;">31.12.2999</div><div class="t" style="left:1859px;top:467.84px;width:53px;height:15px;overflow:hidden;font-size:12px;color:#1b1b1b;letter-spacing:-0.75px;">249068E3-B</div><div class="r" style="left:23px;top:486px;width:1893px;height:23px;background:#f3f3f3;"></div><div class="r" style="left:23px;top:509px;width:1893px;height:1px;background:#e4e4e4;"></div><div class="r" style="left:78px;top:486px;width:1px;height:23px;background:#e4e4e4;"></div><div class="r" style="left:107px;top:486px;width:1px;height:23px;background:#e4e4e4;"></div><div class="r" style="left:293px;top:486px;width:1px;height:23px;background:#e4e4e4;"></div><div class="r" style="left:343px;top:486px;width:1px;height:23px;background:#e4e4e4;"></div><div class="r" style="left:406px;top:486px;width:1px;height:23px;background:#e4e4e4;"></div><div class="r" style="left:444px;top:486px;width:1px;height:23px;background:#e4e4e4;"></div><div class="r" style="left:588px;top:486px;width:1px;height:23px;background:#e4e4e4;"></div><div class="r" style="left:628px;top:486px;width:1px;height:23px;background:#e4e4e4;"></div><div class="r" style="left:924px;top:486px;width:1px;height:23px;background:#e4e4e4;"></div><div class="r" style="left:1110px;top:486px;width:1px;height:23px;background:#e4e4e4;"></div><div class="r" style="left:1177px;top:486px;width:1px;height:23px;background:#e4e4e4;"></div><div class="r" style="left:1242px;top:486px;width:1px;height:23px;background:#e4e4e4;"></div><div class="r" style="left:1306px;top:486px;width:1px;height:23px;background:#e4e4e4;"></div><div class="r" style="left:1528px;top:486px;width:1px;height:23px;background:#e4e4e4;"></div><div class="r" style="left:1614px;top:486px;width:1px;height:23px;background:#e4e4e4;"></div><div class="r" style="left:1674px;top:486px;width:1px;height:23px;background:#e4e4e4;"></div><div class="r" style="left:1734px;top:486px;width:1px;height:23px;background:#e4e4e4;"></div><div class="r" style="left:1794px;top:486px;width:1px;height:23px;background:#e4e4e4;"></div><div class="r" style="left:1854px;top:486px;width:1px;height:23px;background:#e4e4e4;"></div><div class="t" style="left:22px;top:491.84px;width:51px;height:15px;text-align:right;overflow:hidden;font-size:12px;color:#1b1b1b;letter-spacing:-0.9px;">3005</div><div class="t" style="left:83px;top:491.84px;width:20px;height:15px;overflow:hidden;font-size:12px;color:#1b1b1b;">S</div><div class="t" style="left:112px;top:491.84px;font-size:12px;color:#1b1b1b">Nacht<span class="hl">zu</span>schlag</div><div class="t" style="left:298px;top:491.84px;width:41px;height:15px;overflow:hidden;font-size:12px;color:#1b1b1b;">Stunden</div><div class="t" style="left:411px;top:491.84px;width:29px;height:15px;overflow:hidden;font-size:12px;color:#1b1b1b;">Ja</div><div class="t" style="left:593px;top:491.84px;width:31px;height:15px;overflow:hidden;font-size:12px;color:#1b1b1b;">Bed.!</div><div class="t" style="left:633px;top:491.84px;width:287px;height:15px;overflow:hidden;font-size:12px;color:#1b1b1b;letter-spacing:-0.25px;">Zeitraum: 22:00-06:00</div><div class="t" style="left:929px;top:491.84px;width:177px;height:15px;overflow:hidden;font-size:12px;color:#1b1b1b;"></div><div class="t" style="left:1242px;top:491.84px;width:59px;height:15px;text-align:right;overflow:hidden;font-size:12px;color:#1b1b1b;">1</div><div class="t" style="left:1533px;top:491.84px;width:77px;height:15px;overflow:hidden;font-size:12px;color:#1b1b1b;">nicht prüfen</div><div class="t" style="left:1619px;top:491.84px;width:51px;height:15px;overflow:hidden;font-size:12px;color:#1b1b1b;">Ja</div><div class="t" style="left:1679px;top:491.84px;width:51px;height:15px;overflow:hidden;font-size:12px;color:#1b1b1b;letter-spacing:-0.55px;">01.01.2000</div><div class="t" style="left:1739px;top:491.84px;width:51px;height:15px;overflow:hidden;font-size:12px;color:#1b1b1b;letter-spacing:-0.55px;">31.12.2999</div><div class="t" style="left:1859px;top:491.84px;width:53px;height:15px;overflow:hidden;font-size:12px;color:#1b1b1b;letter-spacing:-0.75px;">F14BFD04-C</div><div class="r" style="left:23px;top:510px;width:1893px;height:23px;background:#ffffff;"></div><div class="r" style="left:23px;top:533px;width:1893px;height:1px;background:#e4e4e4;"></div><div class="r" style="left:78px;top:510px;width:1px;height:23px;background:#e4e4e4;"></div><div class="r" style="left:107px;top:510px;width:1px;height:23px;background:#e4e4e4;"></div><div class="r" style="left:293px;top:510px;width:1px;height:23px;background:#e4e4e4;"></div><div class="r" style="left:343px;top:510px;width:1px;height:23px;background:#e4e4e4;"></div><div class="r" style="left:406px;top:510px;width:1px;height:23px;background:#e4e4e4;"></div><div class="r" style="left:444px;top:510px;width:1px;height:23px;background:#e4e4e4;"></div><div class="r" style="left:588px;top:510px;width:1px;height:23px;background:#e4e4e4;"></div><div class="r" style="left:628px;top:510px;width:1px;height:23px;background:#e4e4e4;"></div><div class="r" style="left:924px;top:510px;width:1px;height:23px;background:#e4e4e4;"></div><div class="r" style="left:1110px;top:510px;width:1px;height:23px;background:#e4e4e4;"></div><div class="r" style="left:1177px;top:510px;width:1px;height:23px;background:#e4e4e4;"></div><div class="r" style="left:1242px;top:510px;width:1px;height:23px;background:#e4e4e4;"></div><div class="r" style="left:1306px;top:510px;width:1px;height:23px;background:#e4e4e4;"></div><div class="r" style="left:1528px;top:510px;width:1px;height:23px;background:#e4e4e4;"></div><div class="r" style="left:1614px;top:510px;width:1px;height:23px;background:#e4e4e4;"></div><div class="r" style="left:1674px;top:510px;width:1px;height:23px;background:#e4e4e4;"></div><div class="r" style="left:1734px;top:510px;width:1px;height:23px;background:#e4e4e4;"></div><div class="r" style="left:1794px;top:510px;width:1px;height:23px;background:#e4e4e4;"></div><div class="r" style="left:1854px;top:510px;width:1px;height:23px;background:#e4e4e4;"></div><div class="t" style="left:22px;top:515.84px;width:51px;height:15px;text-align:right;overflow:hidden;font-size:12px;color:#1b1b1b;letter-spacing:-0.9px;">3006</div><div class="t" style="left:83px;top:515.84px;width:20px;height:15px;overflow:hidden;font-size:12px;color:#1b1b1b;">S</div><div class="t" style="left:112px;top:515.84px;font-size:12px;color:#1b1b1b">Nacht<span class="hl">zu</span>schlag</div><div class="t" style="left:298px;top:515.84px;width:41px;height:15px;overflow:hidden;font-size:12px;color:#1b1b1b;">Stunden</div><div class="t" style="left:411px;top:515.84px;width:29px;height:15px;overflow:hidden;font-size:12px;color:#1b1b1b;">Ja</div><div class="t" style="left:593px;top:515.84px;width:31px;height:15px;overflow:hidden;font-size:12px;color:#1b1b1b;">Bed.!</div><div class="t" style="left:633px;top:515.84px;width:287px;height:15px;overflow:hidden;font-size:12px;color:#1b1b1b;letter-spacing:-0.25px;">Zeitraum: 00:00-04:00</div><div class="t" style="left:929px;top:515.84px;width:177px;height:15px;overflow:hidden;font-size:12px;color:#1b1b1b;"></div><div class="t" style="left:1242px;top:515.84px;width:59px;height:15px;text-align:right;overflow:hidden;font-size:12px;color:#1b1b1b;">1</div><div class="t" style="left:1533px;top:515.84px;width:77px;height:15px;overflow:hidden;font-size:12px;color:#1b1b1b;">nicht prüfen</div><div class="t" style="left:1619px;top:515.84px;width:51px;height:15px;overflow:hidden;font-size:12px;color:#1b1b1b;">Ja</div><div class="t" style="left:1679px;top:515.84px;width:51px;height:15px;overflow:hidden;font-size:12px;color:#1b1b1b;letter-spacing:-0.55px;">01.01.2000</div><div class="t" style="left:1739px;top:515.84px;width:51px;height:15px;overflow:hidden;font-size:12px;color:#1b1b1b;letter-spacing:-0.55px;">31.12.2999</div><div class="t" style="left:1859px;top:515.84px;width:53px;height:15px;overflow:hidden;font-size:12px;color:#1b1b1b;letter-spacing:-0.75px;">04219EEE-D</div><div class="r" style="left:23px;top:534px;width:1893px;height:23px;background:#f3f3f3;"></div><div class="r" style="left:23px;top:557px;width:1893px;height:1px;background:#e4e4e4;"></div><div class="r" style="left:78px;top:534px;width:1px;height:23px;background:#e4e4e4;"></div><div class="r" style="left:107px;top:534px;width:1px;height:23px;background:#e4e4e4;"></div><div class="r" style="left:293px;top:534px;width:1px;height:23px;background:#e4e4e4;"></div><div class="r" style="left:343px;top:534px;width:1px;height:23px;background:#e4e4e4;"></div><div class="r" style="left:406px;top:534px;width:1px;height:23px;background:#e4e4e4;"></div><div class="r" style="left:444px;top:534px;width:1px;height:23px;background:#e4e4e4;"></div><div class="r" style="left:588px;top:534px;width:1px;height:23px;background:#e4e4e4;"></div><div class="r" style="left:628px;top:534px;width:1px;height:23px;background:#e4e4e4;"></div><div class="r" style="left:924px;top:534px;width:1px;height:23px;background:#e4e4e4;"></div><div class="r" style="left:1110px;top:534px;width:1px;height:23px;background:#e4e4e4;"></div><div class="r" style="left:1177px;top:534px;width:1px;height:23px;background:#e4e4e4;"></div><div class="r" style="left:1242px;top:534px;width:1px;height:23px;background:#e4e4e4;"></div><div class="r" style="left:1306px;top:534px;width:1px;height:23px;background:#e4e4e4;"></div><div class="r" style="left:1528px;top:534px;width:1px;height:23px;background:#e4e4e4;"></div><div class="r" style="left:1614px;top:534px;width:1px;height:23px;background:#e4e4e4;"></div><div class="r" style="left:1674px;top:534px;width:1px;height:23px;background:#e4e4e4;"></div><div class="r" style="left:1734px;top:534px;width:1px;height:23px;background:#e4e4e4;"></div><div class="r" style="left:1794px;top:534px;width:1px;height:23px;background:#e4e4e4;"></div><div class="r" style="left:1854px;top:534px;width:1px;height:23px;background:#e4e4e4;"></div><div class="t" style="left:22px;top:539.84px;width:51px;height:15px;text-align:right;overflow:hidden;font-size:12px;color:#1b1b1b;letter-spacing:-0.9px;">3007</div><div class="t" style="left:83px;top:539.84px;width:20px;height:15px;overflow:hidden;font-size:12px;color:#1b1b1b;">A</div><div class="t" style="left:112px;top:539.84px;font-size:12px;color:#1b1b1b">Sonntags<span class="hl">zu</span>schlag summiert</div><div class="t" style="left:298px;top:539.84px;width:41px;height:15px;overflow:hidden;font-size:12px;color:#1b1b1b;">Stunden</div><div class="t" style="left:411px;top:539.84px;width:29px;height:15px;overflow:hidden;font-size:12px;color:#1b1b1b;">Ja</div><div class="t" style="left:593px;top:539.84px;width:31px;height:15px;overflow:hidden;font-size:12px;color:#1b1b1b;"></div><div class="t" style="left:633px;top:539.84px;width:287px;height:15px;overflow:hidden;font-size:12px;color:#1b1b1b;letter-spacing:-0.25px;">-arithmetisch-</div><div class="t" style="left:929px;top:539.84px;width:177px;height:15px;overflow:hidden;font-size:12px;color:#1b1b1b;"></div><div class="t" style="left:1242px;top:539.84px;width:59px;height:15px;text-align:right;overflow:hidden;font-size:12px;color:#1b1b1b;"></div><div class="t" style="left:1533px;top:539.84px;width:77px;height:15px;overflow:hidden;font-size:12px;color:#1b1b1b;">nicht prüfen</div><div class="t" style="left:1619px;top:539.84px;width:51px;height:15px;overflow:hidden;font-size:12px;color:#1b1b1b;">Ja</div><div class="t" style="left:1679px;top:539.84px;width:51px;height:15px;overflow:hidden;font-size:12px;color:#1b1b1b;letter-spacing:-0.55px;">01.01.2000</div><div class="t" style="left:1739px;top:539.84px;width:51px;height:15px;overflow:hidden;font-size:12px;color:#1b1b1b;letter-spacing:-0.55px;">31.12.2999</div><div class="t" style="left:1859px;top:539.84px;width:53px;height:15px;overflow:hidden;font-size:12px;color:#1b1b1b;letter-spacing:-0.75px;">CD73F221-E</div><div class="r" style="left:23px;top:558px;width:1893px;height:23px;background:#ffffff;"></div><div class="r" style="left:23px;top:581px;width:1893px;height:1px;background:#e4e4e4;"></div><div class="r" style="left:78px;top:558px;width:1px;height:23px;background:#e4e4e4;"></div><div class="r" style="left:107px;top:558px;width:1px;height:23px;background:#e4e4e4;"></div><div class="r" style="left:293px;top:558px;width:1px;height:23px;background:#e4e4e4;"></div><div class="r" style="left:343px;top:558px;width:1px;height:23px;background:#e4e4e4;"></div><div class="r" style="left:406px;top:558px;width:1px;height:23px;background:#e4e4e4;"></div><div class="r" style="left:444px;top:558px;width:1px;height:23px;background:#e4e4e4;"></div><div class="r" style="left:588px;top:558px;width:1px;height:23px;background:#e4e4e4;"></div><div class="r" style="left:628px;top:558px;width:1px;height:23px;background:#e4e4e4;"></div><div class="r" style="left:924px;top:558px;width:1px;height:23px;background:#e4e4e4;"></div><div class="r" style="left:1110px;top:558px;width:1px;height:23px;background:#e4e4e4;"></div><div class="r" style="left:1177px;top:558px;width:1px;height:23px;background:#e4e4e4;"></div><div class="r" style="left:1242px;top:558px;width:1px;height:23px;background:#e4e4e4;"></div><div class="r" style="left:1306px;top:558px;width:1px;height:23px;background:#e4e4e4;"></div><div class="r" style="left:1528px;top:558px;width:1px;height:23px;background:#e4e4e4;"></div><div class="r" style="left:1614px;top:558px;width:1px;height:23px;background:#e4e4e4;"></div><div class="r" style="left:1674px;top:558px;width:1px;height:23px;background:#e4e4e4;"></div><div class="r" style="left:1734px;top:558px;width:1px;height:23px;background:#e4e4e4;"></div><div class="r" style="left:1794px;top:558px;width:1px;height:23px;background:#e4e4e4;"></div><div class="r" style="left:1854px;top:558px;width:1px;height:23px;background:#e4e4e4;"></div><div class="t" style="left:22px;top:563.84px;width:51px;height:15px;text-align:right;overflow:hidden;font-size:12px;color:#1b1b1b;letter-spacing:-0.9px;">3008</div><div class="t" style="left:83px;top:563.84px;width:20px;height:15px;overflow:hidden;font-size:12px;color:#1b1b1b;">M</div><div class="t" style="left:112px;top:563.84px;font-size:12px;color:#1b1b1b">Erschwernis<span class="hl">zu</span>lage 1%</div><div class="t" style="left:298px;top:563.84px;width:41px;height:15px;overflow:hidden;font-size:12px;color:#1b1b1b;">Stunden</div><div class="t" style="left:411px;top:563.84px;width:29px;height:15px;overflow:hidden;font-size:12px;color:#1b1b1b;">Ja</div><div class="t" style="left:593px;top:563.84px;width:31px;height:15px;overflow:hidden;font-size:12px;color:#1b1b1b;"></div><div class="t" style="left:633px;top:563.84px;width:287px;height:15px;overflow:hidden;font-size:12px;color:#1b1b1b;letter-spacing:-0.25px;">-keine-</div><div class="t" style="left:929px;top:563.84px;width:177px;height:15px;overflow:hidden;font-size:12px;color:#1b1b1b;"></div><div class="t" style="left:1242px;top:563.84px;width:59px;height:15px;text-align:right;overflow:hidden;font-size:12px;color:#1b1b1b;"></div><div class="t" style="left:1533px;top:563.84px;width:77px;height:15px;overflow:hidden;font-size:12px;color:#1b1b1b;">nicht prüfen</div><div class="t" style="left:1619px;top:563.84px;width:51px;height:15px;overflow:hidden;font-size:12px;color:#1b1b1b;">Ja</div><div class="t" style="left:1679px;top:563.84px;width:51px;height:15px;overflow:hidden;font-size:12px;color:#1b1b1b;letter-spacing:-0.55px;">01.01.2000</div><div class="t" style="left:1739px;top:563.84px;width:51px;height:15px;overflow:hidden;font-size:12px;color:#1b1b1b;letter-spacing:-0.55px;">31.12.2999</div><div class="t" style="left:1859px;top:563.84px;width:53px;height:15px;overflow:hidden;font-size:12px;color:#1b1b1b;letter-spacing:-0.75px;">A2C77CB9-</div><div class="r" style="left:23px;top:582px;width:1893px;height:23px;background:#f3f3f3;"></div><div class="r" style="left:23px;top:605px;width:1893px;height:1px;background:#e4e4e4;"></div><div class="r" style="left:78px;top:582px;width:1px;height:23px;background:#e4e4e4;"></div><div class="r" style="left:107px;top:582px;width:1px;height:23px;background:#e4e4e4;"></div><div class="r" style="left:293px;top:582px;width:1px;height:23px;background:#e4e4e4;"></div><div class="r" style="left:343px;top:582px;width:1px;height:23px;background:#e4e4e4;"></div><div class="r" style="left:406px;top:582px;width:1px;height:23px;background:#e4e4e4;"></div><div class="r" style="left:444px;top:582px;width:1px;height:23px;background:#e4e4e4;"></div><div class="r" style="left:588px;top:582px;width:1px;height:23px;background:#e4e4e4;"></div><div class="r" style="left:628px;top:582px;width:1px;height:23px;background:#e4e4e4;"></div><div class="r" style="left:924px;top:582px;width:1px;height:23px;background:#e4e4e4;"></div><div class="r" style="left:1110px;top:582px;width:1px;height:23px;background:#e4e4e4;"></div><div class="r" style="left:1177px;top:582px;width:1px;height:23px;background:#e4e4e4;"></div><div class="r" style="left:1242px;top:582px;width:1px;height:23px;background:#e4e4e4;"></div><div class="r" style="left:1306px;top:582px;width:1px;height:23px;background:#e4e4e4;"></div><div class="r" style="left:1528px;top:582px;width:1px;height:23px;background:#e4e4e4;"></div><div class="r" style="left:1614px;top:582px;width:1px;height:23px;background:#e4e4e4;"></div><div class="r" style="left:1674px;top:582px;width:1px;height:23px;background:#e4e4e4;"></div><div class="r" style="left:1734px;top:582px;width:1px;height:23px;background:#e4e4e4;"></div><div class="r" style="left:1794px;top:582px;width:1px;height:23px;background:#e4e4e4;"></div><div class="r" style="left:1854px;top:582px;width:1px;height:23px;background:#e4e4e4;"></div><div class="t" style="left:22px;top:587.84px;width:51px;height:15px;text-align:right;overflow:hidden;font-size:12px;color:#1b1b1b;letter-spacing:-0.9px;">3009</div><div class="t" style="left:83px;top:587.84px;width:20px;height:15px;overflow:hidden;font-size:12px;color:#1b1b1b;">M</div><div class="t" style="left:112px;top:587.84px;font-size:12px;color:#1b1b1b">Erschwernis<span class="hl">zu</span>lage 2%</div><div class="t" style="left:298px;top:587.84px;width:41px;height:15px;overflow:hidden;font-size:12px;color:#1b1b1b;">Stunden</div><div class="t" style="left:411px;top:587.84px;width:29px;height:15px;overflow:hidden;font-size:12px;color:#1b1b1b;">Ja</div><div class="t" style="left:593px;top:587.84px;width:31px;height:15px;overflow:hidden;font-size:12px;color:#1b1b1b;"></div><div class="t" style="left:633px;top:587.84px;width:287px;height:15px;overflow:hidden;font-size:12px;color:#1b1b1b;letter-spacing:-0.25px;">-keine-</div><div class="t" style="left:929px;top:587.84px;width:177px;height:15px;overflow:hidden;font-size:12px;color:#1b1b1b;"></div><div class="t" style="left:1242px;top:587.84px;width:59px;height:15px;text-align:right;overflow:hidden;font-size:12px;color:#1b1b1b;"></div><div class="t" style="left:1533px;top:587.84px;width:77px;height:15px;overflow:hidden;font-size:12px;color:#1b1b1b;">nicht prüfen</div><div class="t" style="left:1619px;top:587.84px;width:51px;height:15px;overflow:hidden;font-size:12px;color:#1b1b1b;">Ja</div><div class="t" style="left:1679px;top:587.84px;width:51px;height:15px;overflow:hidden;font-size:12px;color:#1b1b1b;letter-spacing:-0.55px;">01.01.2000</div><div class="t" style="left:1739px;top:587.84px;width:51px;height:15px;overflow:hidden;font-size:12px;color:#1b1b1b;letter-spacing:-0.55px;">31.12.2999</div><div class="t" style="left:1859px;top:587.84px;width:53px;height:15px;overflow:hidden;font-size:12px;color:#1b1b1b;letter-spacing:-0.75px;">272A3A22-</div><div class="r" style="left:19px;top:1019px;width:1901px;height:20px;background:#ececec;"></div><div class="t " style="left:1846.5px;top:1022.84px;font-size:12px;color:#1b1b1b;font-weight:400;">9 Zeitart</div><div class="r" style="left:0px;top:1039px;width:279px;height:2px;background:#6f6f6f;"></div><div class="r" style="left:340px;top:1039px;width:1580px;height:2px;background:#6f6f6f;"></div><svg class="r" style="left:0;top:1041px" width="1920" height="21" shape-rendering="crispEdges"><defs><pattern id="dp" width="2" height="2" patternUnits="userSpaceOnUse"><rect width="2" height="2" fill="#fdfdfd"/><rect x="0" y="0" width="1" height="1" fill="#cbcbcb"/><rect x="1" y="1" width="1" height="1" fill="#cbcbcb"/></pattern></defs><rect width="1920" height="21" fill="url(#dp)"/></svg><div class="r" style="left:0px;top:1062px;width:1920px;height:18px;background:#eeeeee;"></div><svg class="r" style="left:6px;top:1039px" width="116" height="20"><path d="M1.5 1 L6 17 H107 L113 1" fill="#d6d6d6" stroke="#6f6f6f" stroke-width="1.4"/></svg><div class="t " style="left:13.5px;top:1042.84px;font-size:12px;color:#111;font-weight:400;letter-spacing:0.23px">Zeiten bearbeiten</div><svg class="r" style="left:116px;top:1039px" width="93" height="20"><path d="M1.5 1 L6 17 H84 L90 1" fill="#d6d6d6" stroke="#6f6f6f" stroke-width="1.4"/></svg><div class="t " style="left:122.0px;top:1042.84px;font-size:12px;color:#111;font-weight:400;letter-spacing:0.05px">Fehlerprotokoll</div><svg class="r" style="left:203px;top:1039px" width="79" height="20"><path d="M1.5 1 L6 17 H70 L76 1" fill="#d6d6d6" stroke="#6f6f6f" stroke-width="1.4"/></svg><div class="t " style="left:213.0px;top:1042.84px;font-size:12px;color:#111;font-weight:400;letter-spacing:-0.15px">Tagespläne</div><svg class="r" style="left:276px;top:1039px" width="68" height="20"><path d="M1.5 0 V1.5 L6 17 H59 L65 1.5 V0 Z" fill="#f0f0f0"/><path d="M1.5 1.5 L6 17 H59 L65 1.5" fill="none" stroke="#6f6f6f" stroke-width="1.4"/></svg><div class="t " style="left:283.5px;top:1042.84px;font-size:12px;color:#111;font-weight:400;letter-spacing:0.2px">Zeitarten</div><div class="t " style="left:3.5px;top:1064.14px;font-size:12px;color:#2a2a2a;font-weight:400;">Mandant:</div><div class="t " style="left:386.0px;top:1064.14px;font-size:12px;color:#2a2a2a;font-weight:400;">Anmeldung:&nbsp; SPDATA / SP</div><svg class="r" style="left:929px;top:1062px" width="17" height="17" viewBox="0 0 17 17"><circle cx="8.5" cy="8" r="8" fill="#0b96d4"/><path d="M0.5 8 A8 8 0 0 1 14.2 2.4 L2.9 13.6 A8 8 0 0 1 0.5 8 Z" fill="#12a9e8"/><text x="8.5" y="12.6" text-anchor="middle" font-family="Liberation Sans" font-weight="700" font-size="12.5" fill="#e8fbff">?</text></svg><div class="t " style="left:953.0px;top:1064.14px;font-size:12px;color:#2a2a2a;font-weight:400;letter-spacing:-0.2px">TC &lt;unbekannter Status&gt;</div><svg class="r" style="left:1363px;top:1062px" width="17" height="17" viewBox="0 0 17 17"><circle cx="8.5" cy="8" r="8" fill="#0b96d4"/><path d="M0.5 8 A8 8 0 0 1 14.2 2.4 L2.9 13.6 A8 8 0 0 1 0.5 8 Z" fill="#12a9e8"/><text x="8.5" y="12.6" text-anchor="middle" font-family="Liberation Sans" font-weight="700" font-size="12.5" fill="#e8fbff">?</text></svg><div class="t " style="left:1386.5px;top:1064.14px;font-size:12px;color:#2a2a2a;font-weight:400;letter-spacing:-0.25px">DSGVO-Service &lt;unbekannter Status&gt;</div><svg class="r" style="left:1737px;top:1062px" width="17" height="17" viewBox="0 0 17 17"><defs><radialGradient id="gg" cx="0.35" cy="0.3" r="0.75"><stop offset="0" stop-color="#b5ec5a"/><stop offset="1" stop-color="#3f9a1c"/></radialGradient></defs><circle cx="8.5" cy="8.5" r="8" fill="url(#gg)"/></svg><div class="t " style="left:1779.5px;top:1064.14px;font-size:12px;color:#2a2a2a;font-weight:400;letter-spacing:-0.55px">17.03.2026 - 08:26</div><svg class="r" style="left:1880px;top:1061px" width="16" height="18" viewBox="0 0 16 18"><path d="M4.6 8.7 V5.2 A3.9 3.9 0 0 1 12.4 5.2 V6.8" fill="none" stroke="#8c8c8c" stroke-width="1.7"/><rect x="2" y="8.4" width="12" height="8.6" fill="#12a3e4"/><path d="M2 17 L14 8.4 V17 Z" fill="#0a8fd0" opacity="0.6"/><rect x="7.3" y="11.3" width="1.5" height="3.8" fill="#0a3d66"/></svg><svg class="r" style="left:1900px;top:1063px" width="18" height="16" viewBox="0 0 18 16"><rect x="1.5" y="1.5" width="15.5" height="11" fill="#12aeea" stroke="#0b7fc0" stroke-width="1"/><path d="M2 12 L16.5 2 V12 Z" fill="#0b8fd2" opacity="0.5"/><rect x="7.5" y="12.5" width="3.5" height="1.8" fill="#0b7fc0"/><rect x="4.5" y="14" width="9.5" height="1.3" fill="#0b7fc0"/></svg>
</body></html>
